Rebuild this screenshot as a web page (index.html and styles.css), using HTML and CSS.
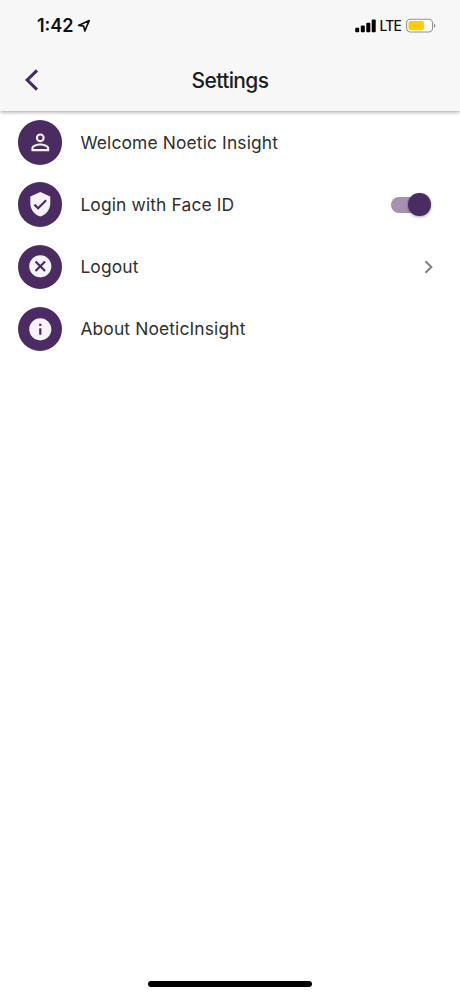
FILE: index.html
```html
<!DOCTYPE html>
<html lang="en">
<head>
<meta charset="utf-8">
<title>Settings</title>
<link rel="stylesheet" href="styles.css">
</head>
<body>
<div class="screen">
  <header class="top">
    <div class="status">
      <span class="time">1:42</span>
      <svg class="location" width="14" height="14" viewBox="0 0 14 14"><path d="M1.6 6.4 12.2 1.6 7.8 12 6.7 7.1Z" fill="none" stroke="#111" stroke-width="1.7" stroke-linejoin="round"/></svg>
      <svg class="signal" width="22" height="14" viewBox="0 0 22 14"><rect x="0.2" y="8.8" width="4" height="4.4" rx="1"/><rect x="5.8" y="6.6" width="4" height="6.6" rx="1"/><rect x="11.3" y="3.8" width="4" height="9.4" rx="1"/><rect x="16.7" y="0.5" width="4" height="12.7" rx="1"/></svg>
      <span class="network">LTE</span>
      <svg class="battery" width="30" height="16" viewBox="0 0 30 16"><rect x="0.6" y="1.2" width="26" height="12.8" rx="4" fill="#fff" stroke="#929292" stroke-width="1.1"/><rect x="2.4" y="3" width="15.6" height="9.2" rx="2.2" fill="#fc0"/><path d="M28 5.4c1.9.8 1.9 3.6 0 4.4Z" fill="#929292"/></svg>
    </div>
    <nav class="bar">
      <svg class="back" width="20" height="24" viewBox="0 0 20 24"><path d="M15 2.4 5.2 12 15 21.6" fill="none" stroke="#442c63" stroke-width="3.1"/></svg>
      <h1 class="title">Settings</h1>
    </nav>
  </header>
  <main class="list">
    <div class="row">
      <span class="disc"><svg class="icon" viewBox="0 0 24 24"><path d="M12 5.9a2.1 2.1 0 1 1 0 4.2 2.1 2.1 0 0 1 0-4.2m0 9c2.97 0 6.1 1.46 6.1 2.1v1.1H5.9V17c0-.64 3.13-2.1 6.1-2.1M12 4C9.79 4 8 5.79 8 8s1.79 4 4 4 4-1.79 4-4-1.79-4-4-4zm0 9c-2.67 0-8 1.34-8 4v3h16v-3c0-2.66-5.33-4-8-4z"/></svg></span>
      <span class="label">Welcome Noetic Insight</span>
    </div>
    <div class="row">
      <span class="disc"><svg class="icon" viewBox="0 0 24 24"><path d="M12 1 3 5v6c0 5.55 3.84 10.74 9 12 5.16-1.26 9-6.45 9-12V5l-9-4zm-2 16-4-4 1.41-1.41L10 14.17l6.59-6.59L18 9l-8 8z"/></svg></span>
      <span class="label">Login with Face ID</span>
      <span class="switch"><span class="thumb"></span></span>
    </div>
    <div class="row">
      <span class="disc"><svg class="icon" viewBox="0 0 24 24"><path d="M12 2C6.47 2 2 6.47 2 12s4.47 10 10 10 10-4.47 10-10S17.53 2 12 2zm5 13.59L15.59 17 12 13.41 8.41 17 7 15.59 10.59 12 7 8.41 8.41 7 12 10.59 15.59 7 17 8.41 13.41 12 17 15.59z"/></svg></span>
      <span class="label">Logout</span>
      <svg class="chevron" width="10" height="14" viewBox="0 0 10 14"><path d="M1.4 1.3 7.4 7 1.4 12.7" fill="none" stroke="#808080" stroke-width="2"/></svg>
    </div>
    <div class="row">
      <span class="disc"><svg class="icon" viewBox="0 0 24 24"><path d="M12 2C6.48 2 2 6.48 2 12s4.48 10 10 10 10-4.48 10-10S17.52 2 12 2zm1 15h-2v-6h2v6zm0-8h-2V7h2v2z"/></svg></span>
      <span class="label">About NoeticInsight</span>
    </div>
  </main>
  <div class="home"></div>
</div>
</body>
</html>
```
FILE: styles.css
```css
* { box-sizing: border-box; }
body { margin: 0; background: #fff; font-family: Inter, "Liberation Sans", sans-serif; color: #303030; }
.screen { width: 460px; height: 996px; display: flex; flex-direction: column; }
.top { height: 111px; background: #f7f7f7; box-shadow: 0 1px 4px rgba(0, 0, 0, .38); }
.status { height: 50px; padding: 2px 24px 0 37px; display: flex; align-items: center; color: #111; }
.time { font-size: 18px; font-weight: 600; line-height: 20px; }
.location { margin-left: 3px; }
.signal { margin-left: auto; fill: #000; }
.network { margin: 0 5px 0 3px; font-size: 13.8px; font-weight: 500; line-height: 18px; letter-spacing: -.8px; }
.battery { display: block; }
.bar { height: 60px; display: grid; grid-template-columns: 60px 1fr 60px; align-items: center; }
.back { margin-left: 22px; }
.title { margin: 1px 0 0; text-align: center; font-size: 21px; font-weight: 450; line-height: 28px; letter-spacing: -.62px; color: #1e1e1e; }
.list { padding: .3px 26px 0 18px; }
.row { height: 62.2px; display: flex; align-items: center; }
.disc { width: 44.4px; height: 44.4px; border-radius: 50%; background: #4a2c63; display: grid; place-items: center; }
.icon { width: 26.6px; height: 26.6px; margin: -1px; fill: #f6f2f8; }
.label { margin-left: 18px; padding-top: 1px; font-size: 17.4px; line-height: 26px; letter-spacing: .14px; }
.switch { width: 38px; height: 16px; margin: 0 5px 0 auto; border-radius: 8px; background: #a591b0; display: flex; align-items: center; justify-content: flex-end; }
.thumb { width: 22.5px; height: 22.5px; margin-right: -1.5px; border-radius: 50%; background: #4a2c63; box-shadow: 0 1px 3px rgba(0, 0, 0, .35); }
.chevron { margin-left: auto; }
.home { width: 164px; height: 5.6px; margin: auto auto 9.4px; border-radius: 3px; background: #000; }
```
